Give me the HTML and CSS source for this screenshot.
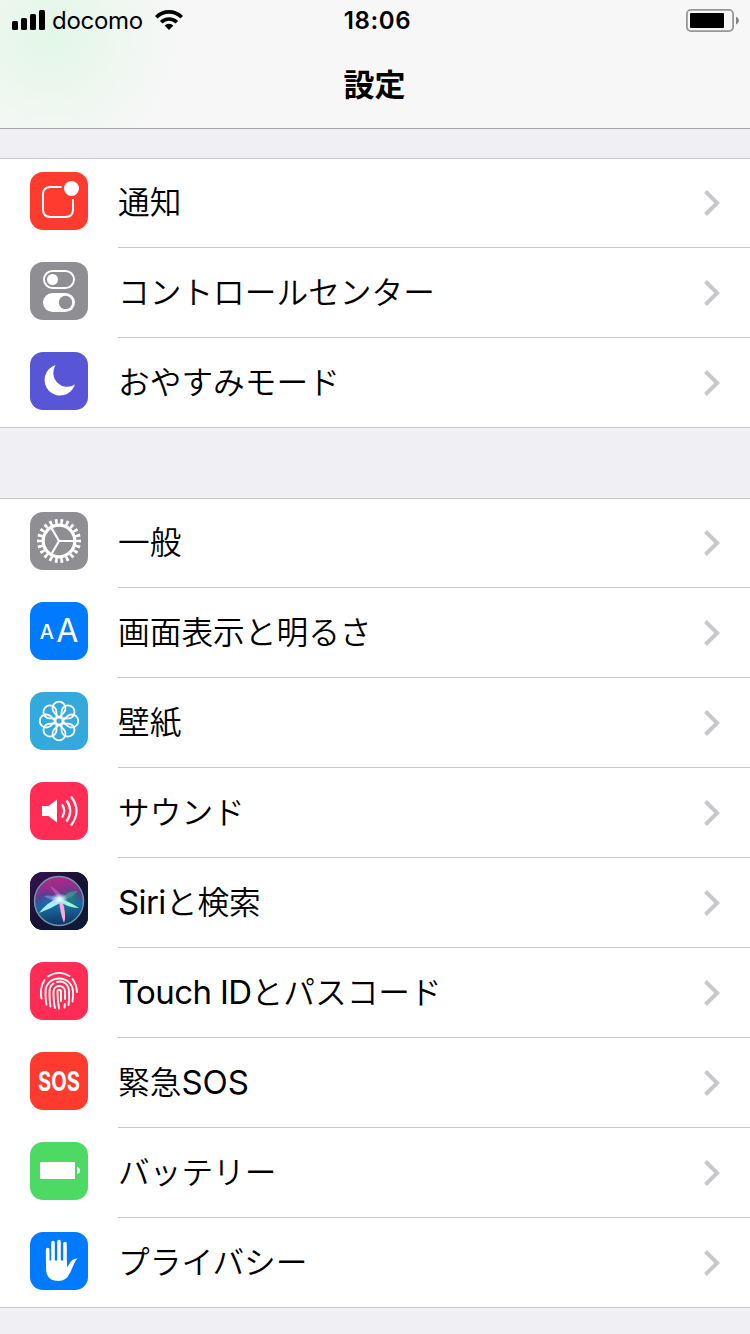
FILE: index.html
```html
<!DOCTYPE html>
<html lang="ja">
<head>
    <meta charset="UTF-8">
    <meta name="viewport" content="width=device-width, initial-scale=1.0">
    <title>設定</title>
    <link rel="stylesheet" href="styles.css">
</head>
<body>
    <header>
        <div class="status-bar">
            <div class="status-left">
                <svg class="signal" width="33" height="20" viewBox="0 0 33 20">
                    <rect x="0" y="11" width="6" height="9" rx="1.5"/>
                    <rect x="9" y="8" width="6" height="12" rx="1.5"/>
                    <rect x="18" y="4" width="6" height="16" rx="1.5"/>
                    <rect x="27" y="0" width="6" height="20" rx="1.5"/>
                </svg>
                <span class="carrier">docomo</span>
                <svg class="wifi" width="28" height="20" viewBox="0 0 28 20">
                    <path d="M1.3 7.2a18 18 0 0 1 25.4 0M6.2 12.2a11.1 11.1 0 0 1 15.6 0" fill="none" stroke="#000" stroke-width="3.7"/>
                    <path d="M9.6 15.5a6.3 6.3 0 0 1 8.8 0L14 20z"/>
                </svg>
            </div>
            <div class="time">18:06</div>
            <div class="status-right">
                <svg width="53" height="23" viewBox="0 0 53 23">
                    <rect x="0.9" y="0.9" width="46.2" height="21.2" rx="4" fill="none" stroke="#979797" stroke-width="1.8"/>
                    <rect x="4" y="4" width="34" height="15" rx="1"/>
                    <path d="M50 7.5q3 1.5 3 4t-3 4z" fill="#858585"/>
                </svg>
            </div>
        </div>
        <h1>設定</h1>
    </header>

    <ul class="list">
        <li class="row">
            <svg class="icon red" viewBox="0 0 58 58">
                <path d="M31.5 15H20.5q-7.5 0-7.5 7.5v15q0 7.5 7.5 7.5h15q7.5 0 7.5-7.5V27" fill="none" stroke="#fff" stroke-width="2"/>
                <circle cx="41.5" cy="16.5" r="7.5" fill="#fff"/>
            </svg>
            <div class="row-body"><span class="label">通知</span><svg class="chevron" viewBox="0 0 16 26"><path d="M1.5 1.5L13.2 13L1.5 24.5"/></svg></div>
        </li>
        <li class="row">
            <svg class="icon gray" viewBox="0 0 58 58">
                <rect x="14" y="9" width="30" height="17" rx="8.5" fill="none" stroke="#fff" stroke-width="2"/>
                <circle cx="22.5" cy="17.5" r="5.5" fill="#fff"/>
                <rect x="13" y="31" width="32" height="19" rx="9.5" fill="#fff"/>
                <circle cx="35.5" cy="40.5" r="6.7" fill="#8e8e93"/>
            </svg>
            <div class="row-body"><span class="label">コントロールセンター</span><svg class="chevron" viewBox="0 0 16 26"><path d="M1.5 1.5L13.2 13L1.5 24.5"/></svg></div>
        </li>
        <li class="row">
            <svg class="icon purple" viewBox="0 0 58 58">
                <path d="M25.5 13A15.6 15.6 0 1 0 45 32.5A14.1 14.1 0 0 1 25.5 13z" fill="#fff"/>
            </svg>
            <div class="row-body"><span class="label">おやすみモード</span><svg class="chevron" viewBox="0 0 16 26"><path d="M1.5 1.5L13.2 13L1.5 24.5"/></svg></div>
        </li>
    </ul>

    <ul class="list">
        <li class="row">
            <svg class="icon gray" viewBox="0 0 58 58">
                <g fill="none" stroke="#fff">
                    <circle cx="29" cy="29" r="19.5" stroke-width="5" pathLength="22" stroke-dasharray=".48 .52" stroke-dashoffset=".24"/>
                    <circle cx="29" cy="29" r="15.8" stroke-width="3.2"/>
                    <path d="M29 29H44M29 29L21.5 16M29 29L21.5 42" stroke-width="2.2"/>
                </g>
            </svg>
            <div class="row-body"><span class="label">一般</span><svg class="chevron" viewBox="0 0 16 26"><path d="M1.5 1.5L13.2 13L1.5 24.5"/></svg></div>
        </li>
        <li class="row">
            <svg class="icon blue" viewBox="0 0 58 58">
                <text class="letter" x="9.7" y="37" font-size="20" font-weight="500">A</text>
                <text class="letter" x="26.3" y="40" font-size="32" font-weight="400">A</text>
            </svg>
            <div class="row-body"><span class="label">画面表示と明るさ</span><svg class="chevron" viewBox="0 0 16 26"><path d="M1.5 1.5L13.2 13L1.5 24.5"/></svg></div>
        </li>
        <li class="row">
            <svg class="icon cyan" viewBox="0 0 58 58">
                <defs><path id="petal" d="M0-3.6L4.6-8.2A6.5 6.5 0 1 0-4.6-8.2z"/></defs>
                <g transform="translate(29 29)" fill="none" stroke="#fff" stroke-width="1.8">
                    <use href="#petal"/>
                    <use href="#petal" transform="rotate(45)"/>
                    <use href="#petal" transform="rotate(90)"/>
                    <use href="#petal" transform="rotate(135)"/>
                    <use href="#petal" transform="rotate(180)"/>
                    <use href="#petal" transform="rotate(225)"/>
                    <use href="#petal" transform="rotate(270)"/>
                    <use href="#petal" transform="rotate(315)"/>
                    <circle r="3.6"/>
                </g>
            </svg>
            <div class="row-body"><span class="label">壁紙</span><svg class="chevron" viewBox="0 0 16 26"><path d="M1.5 1.5L13.2 13L1.5 24.5"/></svg></div>
        </li>
        <li class="row">
            <svg class="icon pink" viewBox="0 0 58 58">
                <path d="M12 24h6.5L27 17.5v23L18.5 34H12z" fill="#fff"/>
                <path d="M32 22.5q4.5 6.5 0 13M36.5 18.5q7.5 10.5 0 21M41 14.5q11 14.5 0 29" fill="none" stroke="#fff" stroke-width="2.2"/>
            </svg>
            <div class="row-body"><span class="label">サウンド</span><svg class="chevron" viewBox="0 0 16 26"><path d="M1.5 1.5L13.2 13L1.5 24.5"/></svg></div>
        </li>
        <li class="row">
            <svg class="icon navy" viewBox="0 0 58 58">
                <defs>
                    <linearGradient id="siriBack" x1="0" y1="0" x2="1" y2="1">
                        <stop offset="0" stop-color="#361151"/>
                        <stop offset=".5" stop-color="#161332"/>
                        <stop offset="1" stop-color="#0b1d38"/>
                    </linearGradient>
                    <linearGradient id="siriOrb" x1=".4" y1="0" x2=".5" y2="1">
                        <stop offset="0" stop-color="#b82689"/>
                        <stop offset=".38" stop-color="#71358d"/>
                        <stop offset=".62" stop-color="#176da3"/>
                        <stop offset="1" stop-color="#12315f"/>
                    </linearGradient>
                    <radialGradient id="siriTeal">
                        <stop offset="0" stop-color="#168c80" stop-opacity=".9"/>
                        <stop offset="1" stop-color="#0b6874" stop-opacity="0"/>
                    </radialGradient>
                    <radialGradient id="siriBlue">
                        <stop offset="0" stop-color="#1774b8" stop-opacity=".9"/>
                        <stop offset="1" stop-color="#144b91" stop-opacity="0"/>
                    </radialGradient>
                    <radialGradient id="siriGlow">
                        <stop offset="0" stop-color="#fff"/>
                        <stop offset=".4" stop-color="#d9f4ff" stop-opacity=".8"/>
                        <stop offset="1" stop-color="#a8c6ff" stop-opacity="0"/>
                    </radialGradient>
                    <filter id="soft"><feGaussianBlur stdDeviation=".6"/></filter>
                </defs>
                <rect width="58" height="58" fill="url(#siriBack)"/>
                <circle cx="29" cy="29" r="24.5" fill="url(#siriOrb)"/>
                <circle cx="41" cy="27" r="12.5" fill="url(#siriTeal)"/>
                <circle cx="17" cy="31" r="13" fill="url(#siriBlue)"/>
                <g filter="url(#soft)">
                    <path d="M20 14Q31 18 32 29Q26 24 20 14z" fill="#d070cc" opacity=".55"/>
                    <path d="M30 28Q38 18 48 19Q42 27 30 28z" fill="#4ab4a4" opacity=".5"/>
                    <path d="M30 25Q16 31 9 41Q22 36 32 30z" fill="#a6f0ff"/>
                    <path d="M29 27Q30 41 34 51Q37 43 32 28z" fill="#ffa8d9"/>
                    <path d="M29 26Q38 29 49 36Q38 36 29 29z" fill="#9df7da"/>
                    <path d="M14 24Q23 22 30 28Q22 30 14 24z" fill="#819dea" opacity=".6"/>
                </g>
                <ellipse cx="29.5" cy="27" rx="9" ry="6" fill="url(#siriGlow)"/>
                <circle cx="29" cy="29" r="24.5" fill="none" stroke="#7199ae" stroke-width="1.4"/>
            </svg>
            <div class="row-body"><span class="label"><span class="latin tight">Siri</span>と検索</span><svg class="chevron" viewBox="0 0 16 26"><path d="M1.5 1.5L13.2 13L1.5 24.5"/></svg></div>
        </li>
        <li class="row">
            <svg class="icon pink" viewBox="0 0 58 58">
                <g fill="none" stroke="#fff" stroke-width="1.9" stroke-linecap="round">
                    <path d="M18 14.5Q28.5 7.5 39.5 14"/>
                    <path d="M11.5 36.5Q10.5 33 11 28Q11.5 22.5 14.5 18"/>
                    <path d="M42.5 17Q46.5 22 47 30"/>
                    <path d="M16.5 42.5Q15.5 38 15.5 30C15.5 12 42.5 12 43 30Q43.3 35 42.5 39.5"/>
                    <path d="M20.5 44.5Q19.5 39 19.5 30Q19.5 24 23.5 21.5"/>
                    <path d="M27 20C34 18 39 23 39 30Q39.5 37 38.5 43"/>
                    <path d="M25 46Q23.5 40 23.5 30C23.5 22 35 22 35 30V37"/>
                    <path d="M34.8 42L34.5 45.5"/>
                    <path d="M29 46.5Q27.5 38 27.5 30C27.5 27 31 27 31 30V39"/>
                </g>
            </svg>
            <div class="row-body"><span class="label"><span class="latin tight">Touch ID</span>とパスコード</span><svg class="chevron" viewBox="0 0 16 26"><path d="M1.5 1.5L13.2 13L1.5 24.5"/></svg></div>
        </li>
        <li class="row">
            <svg class="icon red" viewBox="0 0 58 58">
                <text class="letter" transform="translate(29 38.5) scale(.76 1)" text-anchor="middle" font-size="26.5" font-weight="700">SOS</text>
            </svg>
            <div class="row-body"><span class="label">緊急<span class="latin">SOS</span></span><svg class="chevron" viewBox="0 0 16 26"><path d="M1.5 1.5L13.2 13L1.5 24.5"/></svg></div>
        </li>
        <li class="row">
            <svg class="icon green" viewBox="0 0 58 58">
                <rect x="10" y="20" width="35" height="17" rx="1" fill="#fff"/>
                <path d="M47 25q3 .5 3 3.5t-3 3.5z" fill="#fff"/>
            </svg>
            <div class="row-body"><span class="label">バッテリー</span><svg class="chevron" viewBox="0 0 16 26"><path d="M1.5 1.5L13.2 13L1.5 24.5"/></svg></div>
        </li>
        <li class="row">
            <svg class="icon blue" viewBox="0 0 58 58">
                <path d="M17.7 30V17.5M23 30V10.5M29 30V9.5M35 30V11.5" fill="none" stroke="#fff" stroke-width="3.6" stroke-linecap="round"/>
                <path d="M16 28.5H37V35C40 33 40 26.5 47.5 26.5C44 30 43 35 40 41Q36 49 28.5 49Q16 49 16 36z" fill="#fff"/>
            </svg>
            <div class="row-body"><span class="label">プライバシー</span><svg class="chevron" viewBox="0 0 16 26"><path d="M1.5 1.5L13.2 13L1.5 24.5"/></svg></div>
        </li>
    </ul>
</body>
</html>
```

FILE: styles.css
```css
* {
    box-sizing: border-box;
}
body {
    margin: 0;
    background: #efeff4;
    color: #000;
    font-family: "Noto Sans CJK JP", sans-serif;
    overflow: hidden;
}
header {
    height: 129px;
    margin-bottom: 29px;
    border-bottom: 1px solid #a7a7ac;
    background: radial-gradient(circle at 50px 35px, #e3f7e7 0, #eaf7ed 50px, #f3f7f4 95px, rgba(247,247,247,0) 140px), #f7f7f7;
}
.status-bar {
    display: grid;
    grid-template-columns: 1fr auto 1fr;
    align-items: center;
    height: 40px;
    padding: 0 11px 0 12px;
    font-family: Inter, sans-serif;
    font-size: 24px;
}
.status-left {
    display: flex;
    align-items: center;
    height: 40px;
}
.carrier {
    width: 95px;
    margin-left: 7px;
    padding-top: 2px;
    line-height: 38px;
    letter-spacing: -0.3px;
}
.wifi {
    margin-left: 8px;
}
.time {
    font-weight: 600;
    letter-spacing: 0.6px;
    line-height: 38px;
    padding: 2px 0 0 4px;
    height: 40px;
}
.status-right {
    display: flex;
    justify-content: flex-end;
}
h1 {
    margin: 0;
    padding-right: 1px;
    font-size: 31px;
    line-height: 86px;
    font-weight: 700;
    text-align: center;
}
.list {
    list-style: none;
    margin: 0 0 70px;
    padding: 0;
    background: #fff;
    border-top: 1px solid #c8c7cc;
}
.row {
    display: flex;
    align-items: flex-end;
    height: 90px;
    padding-left: 30px;
}
.row:first-child {
    height: 89px;
}
.row:last-child {
    border-bottom: 1px solid #c8c7cc;
}
.icon {
    width: 58px;
    height: 58px;
    margin: 0 30px 18px 0;
    border-radius: 13px;
    flex-shrink: 0;
}
.row-body {
    flex: 1;
    display: flex;
    align-items: center;
    justify-content: space-between;
    height: 89px;
    padding-right: 30px;
    border-bottom: 1px solid #c8c7cc;
}
.row:last-child .icon {
    margin-bottom: 17px;
}
.row:last-child .row-body {
    height: 88px;
    border-bottom: none;
}
.label {
    padding-bottom: 5px;
    font-size: 31.7px;
    font-weight: 350;
    line-height: 83px;
    white-space: nowrap;
}
.latin {
    font-family: Inter, sans-serif;
    font-size: 33px;
    font-weight: 400;
    line-height: 1;
}
.tight {
    letter-spacing: -0.6px;
}
.chevron {
    width: 16px;
    height: 26px;
}
.chevron path {
    fill: none;
    stroke: #c7c7cc;
    stroke-width: 4;
}
.letter {
    font-family: Inter, sans-serif;
    fill: #fff;
}
.red {
    background: #ff3b30;
}
.gray {
    background: #8e8e93;
}
.purple {
    background: #5856d6;
}
.blue {
    background: #007aff;
}
.cyan {
    background: #34aadc;
}
.pink {
    background: #ff2d55;
}
.navy {
    background: #161332;
}
.green {
    background: #4cd964;
}
```
